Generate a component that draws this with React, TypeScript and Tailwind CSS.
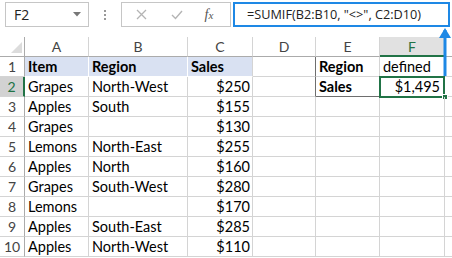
import React from 'react';

const cols = ['A', 'B', 'C', 'D', 'E', 'F'];
const widths = ['w-[64px]', 'w-[99px]', 'w-[65px]', 'w-[63px]', 'w-[64px]', 'w-[65px]'];

interface Row {
  item: string;
  region: string;
  sales: string;
}

const rows: Row[] = [
  { item: 'Grapes', region: 'North-West', sales: '$250' },
  { item: 'Apples', region: 'South', sales: '$155' },
  { item: 'Grapes', region: '', sales: '$130' },
  { item: 'Lemons', region: 'North-East', sales: '$255' },
  { item: 'Apples', region: 'North', sales: '$160' },
  { item: 'Grapes', region: 'South-West', sales: '$280' },
  { item: 'Lemons', region: '', sales: '$170' },
  { item: 'Apples', region: 'South-East', sales: '$285' },
  { item: 'Apples', region: 'North-West', sales: '$110' },
];

const cell = 'h-[20px] shrink-0 border-r border-b border-[#d4d4d4] leading-[20px] px-[3px] whitespace-nowrap overflow-visible';

const Toolbar: React.FC = () => (
  <div className="flex items-start h-[37px] pt-[2px]">
    {/* name box */}
    <div className="ml-[5px] w-[84px] h-[25px] shrink-0 border border-[#c6c6c6] flex items-center justify-between pl-[8px] pr-[7px]">
      <span className="text-[14px] text-[#222] font-['Open_Sans',sans-serif]">F2</span>
      <svg width="8" height="5" viewBox="0 0 8 5"><path d="M0 0h8L4 4.5z" fill="#777" /></svg>
    </div>
    <div className="w-[32px] h-[25px] shrink-0 flex flex-col items-center justify-center gap-[2px]">
      <span className="w-[2px] h-[2px] bg-[#999]" />
      <span className="w-[2px] h-[2px] bg-[#999]" />
      <span className="w-[2px] h-[2px] bg-[#999]" />
    </div>
    {/* cancel / enter / fx */}
    <div className="w-[110px] h-[25px] shrink-0 border border-[#c6c6c6] flex items-center">
      <div className="w-[38px] flex justify-center">
        <svg width="11" height="11" viewBox="0 0 11 11"><path d="M1 1l9 9M10 1l-9 9" stroke="#b4b4b4" strokeWidth="1.3" /></svg>
      </div>
      <div className="w-[34px] flex justify-center">
        <svg width="12" height="10" viewBox="0 0 12 10"><path d="M1 5l3.5 3.5L11 1" stroke="#b4b4b4" strokeWidth="1.4" fill="none" /></svg>
      </div>
      <div className="w-[30px] flex justify-center">
        <span className="italic text-[14px] text-[#555] font-['Liberation_Serif',serif]">f<span className="text-[11px]">x</span></span>
      </div>
    </div>
    {/* formula box */}
    <div className="ml-[2px] w-[217px] h-[25px] shrink-0 border-2 border-[#1e88e5] flex items-center">
      <span className="ml-[12px] text-[12.7px] text-[#222] font-['Open_Sans',sans-serif] whitespace-nowrap">=SUMIF(B2:B10, "&lt;&gt;", C2:D10)</span>
    </div>
  </div>
);

const App: React.FC = () => {
  return (
    <div className="relative w-[452px] h-[258px] overflow-hidden bg-white font-['Lato',sans-serif] text-[14.5px] text-black">
      <Toolbar />

      {/* column headers */}
      <div className="flex">
        <div className="w-[25px] h-[20px] shrink-0 border-r border-b border-[#ababab] relative">
          <svg className="absolute left-[11px] top-[5px]" width="11" height="11" viewBox="0 0 11 11"><path d="M11 0v11H0z" fill="#dcdcdc" /></svg>
        </div>
        {cols.map((c, i) => (
          <div
            key={c}
            className={`${widths[i]} h-[20px] shrink-0 text-center leading-[20px] text-[14px] ${
              c === 'F'
                ? 'bg-[#e1e1e1] text-[#217346] border-r border-[#d4d4d4] border-b-2 border-b-[#217346]'
                : 'text-[#444] border-r border-b border-r-[#d4d4d4] border-b-[#ababab]'
            }`}
          >
            {c}
          </div>
        ))}
        <div className="w-[20px] h-[20px] shrink-0 border-b border-[#ababab]" />
      </div>

      {/* row 1 */}
      <div className="flex">
        <div className="w-[25px] h-[20px] shrink-0 border-r border-b border-r-[#ababab] border-b-[#d4d4d4] text-center leading-[20px] text-[14px] text-[#444]">1</div>
        <div className={`${cell} w-[64px] bg-[#d9e1f2] border-white font-bold`}>Item</div>
        <div className={`${cell} w-[99px] bg-[#d9e1f2] border-white font-bold`}>Region</div>
        <div className={`${cell} w-[65px] bg-[#d9e1f2] border-r-[#d4d4d4] border-b-white font-bold`}>Sales</div>
        <div className={`${cell} w-[63px] border-r-[#6e6e6e]`} />
        <div className={`${cell} w-[64px] font-bold`}>Region</div>
        <div className={`${cell} w-[65px]`}>defined</div>
        <div className={`${cell} w-[20px] border-r-0`} />
      </div>

      {rows.map((r, i) => {
        const n = i + 2;
        const sel = n === 2;
        return (
          <div key={n} className="flex">
            <div
              className={`w-[25px] h-[20px] shrink-0 border-b border-b-[#d4d4d4] text-center leading-[20px] text-[14px] ${
                sel ? 'bg-[#d2d2d2] text-[#217346] border-r-2 border-r-[#217346]' : 'text-[#444] border-r border-r-[#ababab]'
              }`}
            >
              {n}
            </div>
            <div className={`${cell} w-[64px]`}>{r.item}</div>
            <div className={`${cell} w-[99px]`}>{r.region}</div>
            <div className={`${cell} w-[65px] text-right pr-[2px]`}>{r.sales}</div>
            <div className={`${cell} w-[63px] ${sel ? 'border-r-[#6e6e6e]' : ''}`} />
            <div className={`${cell} w-[64px] ${sel ? 'border-b-[#6e6e6e] font-bold' : ''}`}>{sel ? 'Sales' : ''}</div>
            <div className={`${cell} w-[65px] relative ${sel ? 'text-right pr-[4px]' : ''}`}>
              {sel && (
                <>
                  $1,495
                  <div className="absolute left-[-1px] top-[-1px] w-[66px] h-[22px] border-2 border-[#217346]" />
                  <div className="absolute right-[-4px] bottom-[-4px] w-[6px] h-[6px] bg-[#217346] border border-white" />
                </>
              )}
            </div>
            <div className={`${cell} w-[20px] border-r-0`} />
          </div>
        );
      })}

      {/* blue arrow pointing to the formula */}
      <svg className="absolute left-[437px] top-[26px]" width="16" height="52" viewBox="0 0 16 52">
        <path d="M8 4V50" stroke="#1e88e5" strokeWidth="3" />
        <path d="M2 12L8 2l6 10z" fill="#1e88e5" />
      </svg>
    </div>
  );
};

export default App;
